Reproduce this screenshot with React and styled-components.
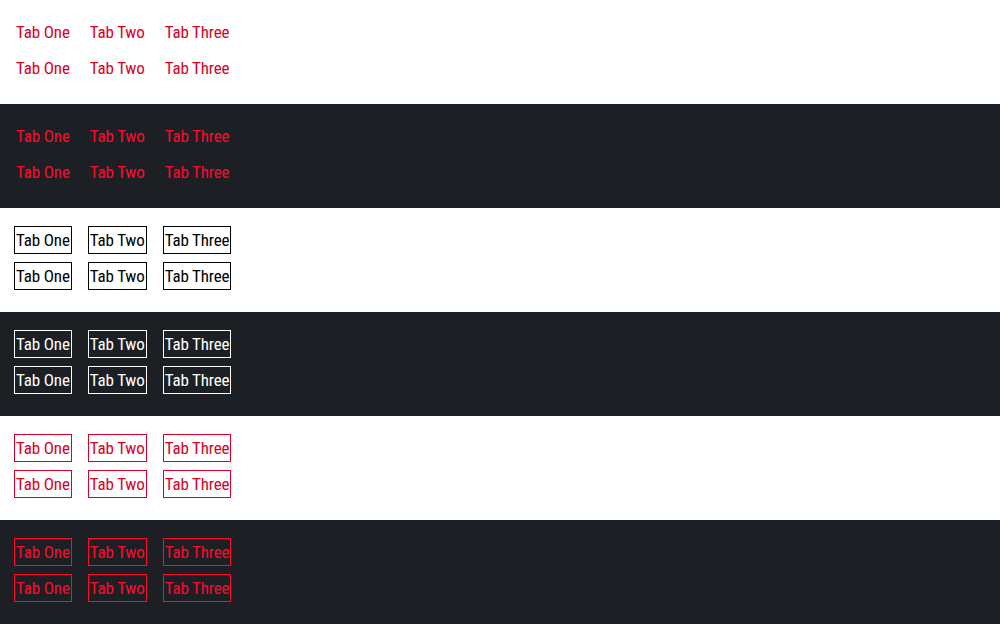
import React from 'react';
import styled, { createGlobalStyle } from 'styled-components';

const GlobalStyle = createGlobalStyle`
  html, body {
    margin: 0;
    padding: 0;
    background: #ffffff;
  }
  body {
    font-family: "Roboto Condensed", "DejaVu Sans Condensed", sans-serif;
  }
`;

const palette = {
  light: { bg: '#ffffff', text: '#da0027', line: '#000000', ink: '#000000' },
  dark: { bg: '#1c1f23', text: '#ff0a2d', line: '#ffffff', ink: '#ffffff' },
};

const Section = styled.section`
  height: 104px;
  box-sizing: border-box;
  padding: 18px 14px 0;
  background: ${(p) => palette[p.$tone].bg};
  display: flex;
  flex-direction: column;
  gap: 8px;
`;

const TabRow = styled.div`
  display: flex;
  gap: 16px;
`;

const Tab = styled.div`
  box-sizing: border-box;
  height: 28px;
  padding: 0 1px;
  display: flex;
  align-items: center;
  font-size: 17px;
  font-weight: 400;
  letter-spacing: -0.15px;
  line-height: 1;
  border: 1px solid ${(p) => (p.$boxed ? p.$border : 'transparent')};
  color: ${(p) => p.$color};
  white-space: nowrap;
`;

const labels = ['Tab One', 'Tab Two', 'Tab Three'];

const variants = [
  { tone: 'light', mode: 'plain' },
  { tone: 'dark', mode: 'plain' },
  { tone: 'light', mode: 'outline' },
  { tone: 'dark', mode: 'outline' },
  { tone: 'light', mode: 'accent' },
  { tone: 'dark', mode: 'accent' },
];

function TabSet({ tone, mode }) {
  const c = palette[tone];
  const color = mode === 'outline' ? c.ink : c.text;
  const border = mode === 'accent' ? c.text : c.line;
  return (
    <TabRow>
      {labels.map((l) => (
        <Tab key={l} $boxed={mode !== 'plain'} $border={border} $color={color}>
          {l}
        </Tab>
      ))}
    </TabRow>
  );
}

export default function App() {
  return (
    <>
      <GlobalStyle />
      {variants.map((v, i) => (
        <Section key={i} $tone={v.tone}>
          <TabSet tone={v.tone} mode={v.mode} />
          <TabSet tone={v.tone} mode={v.mode} />
        </Section>
      ))}
    </>
  );
}
